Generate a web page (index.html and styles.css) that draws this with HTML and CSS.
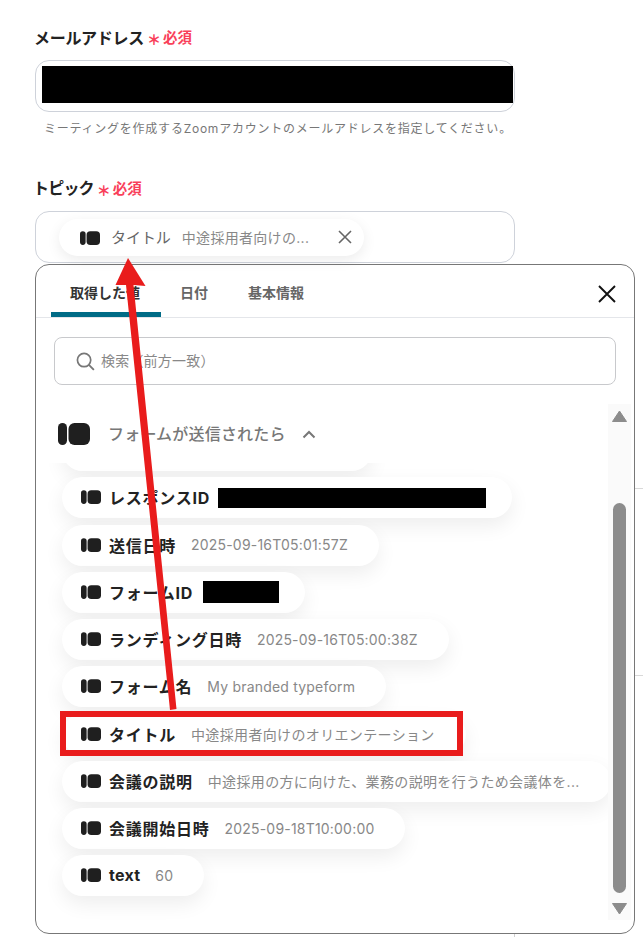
FILE: index.html
```html
<!DOCTYPE html>
<html lang="ja">
<head>
<meta charset="utf-8">
<title>Zoom ミーティング設定</title>
<link rel="stylesheet" href="styles.css">
</head>
<body>
<svg class="defs" width="0" height="0" aria-hidden="true">
  <symbol id="tf" viewBox="0 0 32 22">
    <rect x="0" y="0" width="9" height="22" rx="4.5" fill="#1f1f1f"/>
    <rect x="10.5" y="0" width="21.5" height="22" rx="6" fill="#1f1f1f"/>
  </symbol>
</svg>
<div class="page">
  <div class="label"><span class="label-text">メールアドレス</span><span class="ast">＊</span><span class="req">必須</span></div>
  <div class="input"><div class="redact redact-email"></div></div>
  <p class="hint">ミーティングを作成するZoomアカウントのメールアドレスを指定してください。</p>

  <div class="label label-topic"><span class="label-text label-tight">トピック</span><span class="ast">＊</span><span class="req">必須</span></div>
  <div class="input input-topic">
    <div class="tag">
      <svg class="ic"><use href="#tf"/></svg>
      <span class="tag-name">タイトル</span>
      <span class="tag-val">中途採用者向けの...</span>
      <svg class="tag-x" viewBox="0 0 14 14"><path d="M1 1l12 12M13 1L1 13" stroke="#666" stroke-width="1.6" fill="none"/></svg>
    </div>
  </div>

  <div class="panel">
    <div class="tabs">
      <div class="tab tab-on">取得した値</div>
      <div class="tab">日付</div>
      <div class="tab tab-last">基本情報</div>
      <svg class="close" viewBox="0 0 18 18"><path d="M1 1l16 16M17 1L1 17" stroke="#111" stroke-width="1.9" fill="none"/></svg>
    </div>
    <div class="search">
      <svg class="search-ic" viewBox="0 0 20 20"><circle cx="8.5" cy="8.5" r="7" stroke="#777" stroke-width="1.8" fill="none"/><path d="M13.6 13.6l5.2 5.2" stroke="#777" stroke-width="2" fill="none"/></svg>
      <span class="search-text">検索（前方一致）</span>
    </div>
    <div class="body">
      <div class="list">
        <div class="group">
          <svg class="group-ic"><use href="#tf"/></svg>
          <span class="group-name">フォームが送信されたら</span>
          <svg class="chev" viewBox="0 0 14 9"><path d="M1.5 7.5L7 2l5.500 5.500" stroke="#777" stroke-width="2" fill="none"/></svg>
        </div>
        <div class="chips">
          <div class="chip chip-cut"></div>
          <div class="chip chip-hidden"><svg class="ic"><use href="#tf"/></svg><b>レスポンスID</b><span class="redact redact-id"></span></div>
          <div class="chip"><svg class="ic"><use href="#tf"/></svg><b>送信日時</b><span class="val val-num">2025-09-16T05:01:57Z</span></div>
          <div class="chip chip-hidden"><svg class="ic"><use href="#tf"/></svg><b>フォームID</b><span class="redact redact-form"></span></div>
          <div class="chip"><svg class="ic"><use href="#tf"/></svg><b>ランディング日時</b><span class="val val-num">2025-09-16T05:00:38Z</span></div>
          <div class="chip"><svg class="ic"><use href="#tf"/></svg><b>フォーム名</b><span class="val val-num">My branded typeform</span></div>
          <div class="chip"><svg class="ic"><use href="#tf"/></svg><b>タイトル</b><span class="val">中途採用者向けのオリエンテーション</span></div>
          <div class="chip"><svg class="ic"><use href="#tf"/></svg><b>会議の説明</b><span class="val">中途採用の方に向けた、業務の説明を行うため会議体を...</span></div>
          <div class="chip"><svg class="ic"><use href="#tf"/></svg><b>会議開始日時</b><span class="val val-num">2025-09-18T10:00:00</span></div>
          <div class="chip"><svg class="ic"><use href="#tf"/></svg><b class="name-latin">text</b><span class="val val-num">60</span></div>
        </div>
      </div>
      <div class="scrollbar">
        <svg class="arrow-btn" viewBox="0 0 15 12"><path d="M7.5 1L14.5 11.5H.5z" fill="#8c8c8c" stroke="#8c8c8c" stroke-linejoin="round"/></svg>
        <div class="track"><div class="thumb"></div></div>
        <svg class="arrow-btn" viewBox="0 0 15 12"><path d="M.5.5H14.5L7.5 11z" fill="#8c8c8c" stroke="#8c8c8c" stroke-linejoin="round"/></svg>
      </div>
    </div>
  </div>
</div>

<div class="rule rule-a"></div>
<div class="rule rule-b"></div>
<div class="tick"></div>
<div class="callout"></div>
<svg class="pointer" width="643" height="937" viewBox="0 0 643 937">
  <path d="M128 258L145.500 286L133.500 285L176.500 709L170 710L126 285L115.500 285Z" fill="#e91c1c"/>
</svg>
</body>
</html>
```
FILE: styles.css
```css
* { box-sizing: border-box; }
html, body { margin: 0; height: 937px; overflow: hidden; background: #fff; }
body {
  position: relative;
  font-family: "Inter", "Noto Sans CJK JP", sans-serif;
  color: #222;
}
.defs { position: absolute; }
.page { padding: 26px 0 0 35px; width: 643px; }

.label { display: flex; align-items: center; height: 22px; }
.label-text { font-size: 16px; font-weight: 600; color: #222; letter-spacing: -.3px; margin-left: -1px; padding-bottom: 1px; }
.label-tight { letter-spacing: -.8px; margin-left: -2px; padding-bottom: 2px; }
.ast { color: #f9405a; font-size: 14px; line-height: 22px; margin-left: 3px; width: 14px; padding-top: 4px; font-weight: 900; font-family: "Noto Sans CJK JP", sans-serif; }
.req { color: #f9405a; font-size: 14.5px; font-weight: 700; margin-left: 2px; padding-bottom: 1px; }
.label-topic { margin-top: 39px; }

.input {
  position: relative;
  width: 480px;
  height: 52px;
  margin-top: 12px;
  border: 1px solid #ced2da;
  border-radius: 14px;
  background: #fff;
}
.redact { background: #000; display: block; }
.redact-email { position: absolute; left: 6px; top: 5px; width: 471px; height: 37px; }
.hint { margin: 8px 0 0 9px; height: 18px; font-size: 12px; line-height: 18px; color: #777; letter-spacing: .76px; }

.input-topic { padding: 7px 0 0 23px; }
.tag {
  display: flex;
  align-items: center;
  width: 305px;
  height: 37px;
  padding-left: 21px;
  border-radius: 19px;
  background: #fff;
  box-shadow: 0 4px 14px rgba(0,0,0,.08);
}
.ic { width: 20px; height: 14px; flex: none; }
.tag-name { margin-left: 11px; font-size: 15px; color: #666; letter-spacing: -.05px; padding-bottom: 2px; }
.tag-val { margin-left: 11px; font-size: 14px; color: #888; width: 131px; letter-spacing: .3px; white-space: nowrap; padding-bottom: 2px; }
.tag-x { width: 14px; height: 14px; margin-left: 25px; margin-bottom: 1px; }

.panel {
  width: 600px;
  height: 670px;
  margin-top: 1px;
  border: 1px solid #777;
  border-radius: 14px;
  background: #fff;
  overflow: hidden;
}
.tabs {
  position: relative;
  display: flex;
  height: 53px;
  padding-left: 15px;
  border-bottom: 1px solid #e4e6ea;
}
.tab {
  padding: 0 19px;
  height: 52px;
  line-height: 56px;
  font-size: 14px;
  font-weight: 600;
  color: #666;
}
.tab-last { margin-left: 2px; }
.tab-on { color: #333; border-bottom: 5px solid #006b86; border-radius: 4px 4px 0 0; width: 110px; }
.close { position: absolute; right: 18px; top: 20px; width: 18px; height: 18px; }

.search {
  display: flex;
  align-items: center;
  width: 562px;
  height: 48px;
  margin: 19px 0 0 18px;
  padding-left: 21px;
  border: 1px solid #c8c9cc;
  border-radius: 8px;
  font-size: 14px;
  color: #888;
}
.search-text { letter-spacing: .2px; padding-bottom: 2px; }
.search-ic { width: 19px; height: 19px; margin-right: 6px; }

.body { display: flex; height: 516px; margin-top: 19px; }
.list { width: 572px; flex: none; }
.group { display: flex; align-items: center; height: 58px; padding: 0 0 0 22px; margin-top: 1px; }
.group-ic { width: 32px; height: 22px; }
.group-name { margin-left: 18px; font-size: 16px; font-weight: 500; color: #777; letter-spacing: .2px; padding-bottom: 3px; }
.chev { width: 14px; height: 9px; margin-left: 16px; }

.chips {
  height: 457px;
  margin-right: -8px;
  padding: 0 20px 40px 26px;
  overflow: hidden;
  display: flex;
  flex-direction: column;
  align-items: flex-start;
  gap: 6.25px;
}
.chip {
  flex: none;
  display: flex;
  align-items: center;
  height: 41px;
  padding: 0 31px 1px 19px;
  border-radius: 21px;
  background: #fff;
  box-shadow: 0 8px 20px rgba(0,0,0,.07);
  white-space: nowrap;
}
.chip-hidden { padding-right: 26px; }
.chip-cut { width: 310px; margin-top: -33px; }
.chip b { margin-left: 8px; font-size: 16px; font-weight: 700; color: #222; letter-spacing: .75px; }
.chip .name-latin { letter-spacing: .25px; }
.val { margin-left: 15px; font-size: 14px; color: #888; letter-spacing: .35px; }
.val-num { letter-spacing: .2px; }
.redact-id { width: 268px; height: 20px; margin: 1px 0 0 8px; }
.redact-form { width: 76px; height: 22px; margin: 1px 0 0 10px; }

.scrollbar {
  width: 23px;
  background: #fafafa;
  display: flex;
  flex-direction: column;
  align-items: center;
  position: relative;
  z-index: 1;
}
.arrow-btn { width: 15px; height: 12px; flex: none; margin: 6px 0 5px; }
.track { flex: 1; width: 13px; padding-top: 76px; padding-bottom: 4px; }
.thumb { height: 100%; background: #8c8c8c; border-radius: 7px; }

.rule { position: absolute; left: 635px; width: 8px; height: 1px; background: #d9d9d9; }
.rule-a { top: 488px; }
.rule-b { top: 675px; }
.tick { position: absolute; left: 514px; top: 934px; width: 1px; height: 3px; background: #d0d0d0; }

.callout {
  position: absolute;
  left: 60px;
  top: 711px;
  width: 403px;
  height: 45px;
  border: 6px solid #e91c1c;
}
.pointer { position: absolute; left: 0; top: 0; pointer-events: none; }
```
